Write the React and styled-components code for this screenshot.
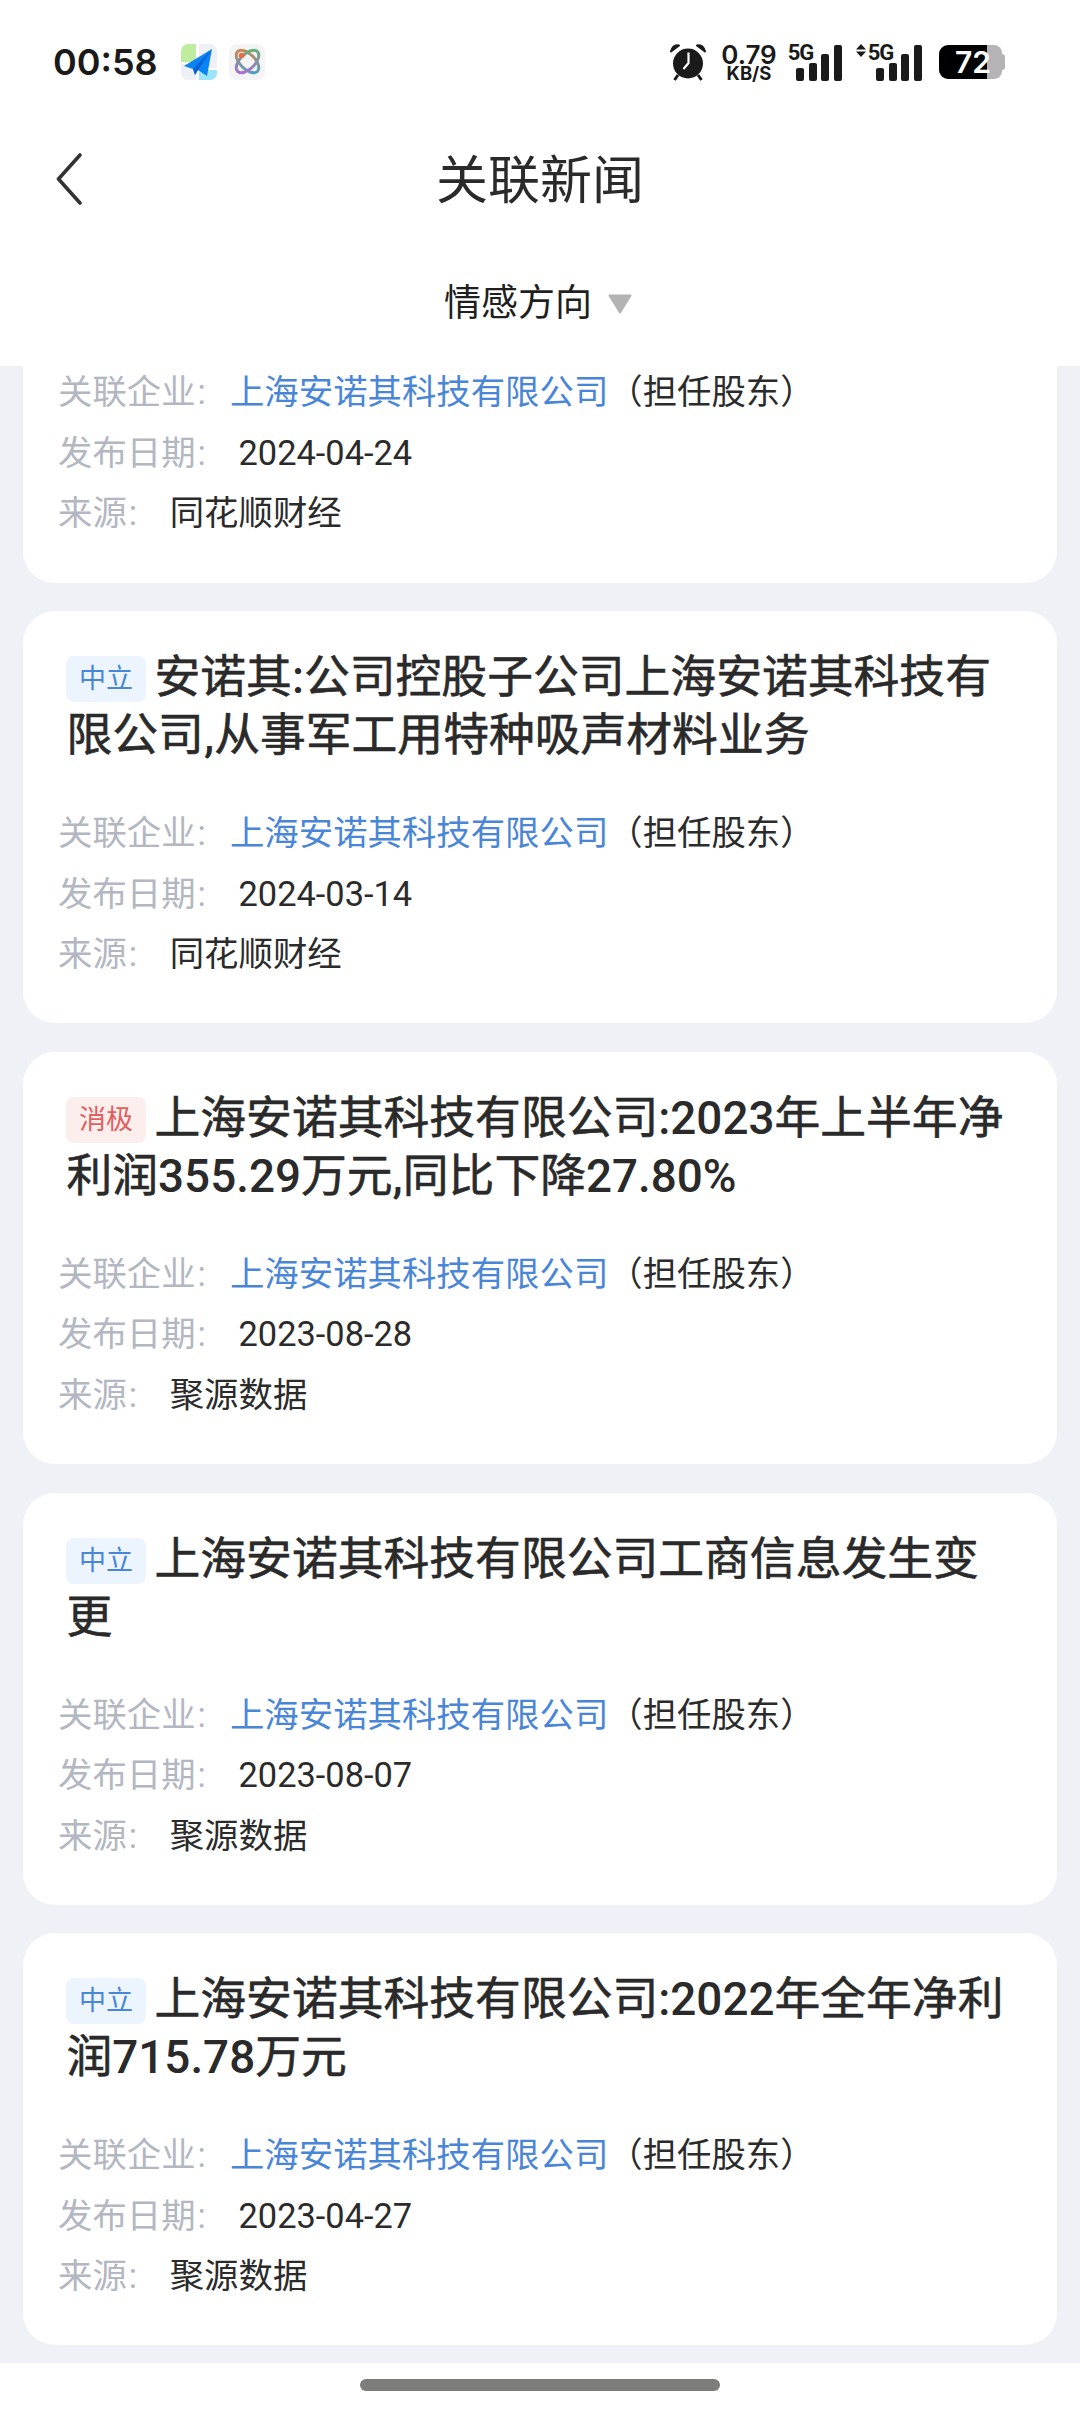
import React from "react";
import styled, { createGlobalStyle } from "styled-components";

const news = [
  { meta: { source: "同花顺财经", date: "2024-04-24" }, clipped: true },
  {
    tag: "中立",
    title: "安诺其:公司控股子公司上海安诺其科技有限公司,从事军工用特种吸声材料业务",
    meta: { source: "同花顺财经", date: "2024-03-14" },
  },
  {
    tag: "消极",
    negative: true,
    title: "上海安诺其科技有限公司:2023年上半年净利润355.29万元,同比下降27.80%",
    meta: { source: "聚源数据", date: "2023-08-28" },
  },
  {
    tag: "中立",
    title: "上海安诺其科技有限公司工商信息发生变更",
    meta: { source: "聚源数据", date: "2023-08-07" },
  },
  {
    tag: "中立",
    title: "上海安诺其科技有限公司:2022年全年净利润715.78万元",
    meta: { source: "聚源数据", date: "2023-04-27" },
  },
];

const AppIconPlane = () => (
  <svg width="36" height="36" viewBox="0 0 36 36">
    <path d="M0 20h15v16H7a7 7 0 0 1-7-7z" fill="#edf1f6" />
    <path d="M18 0h11a7 7 0 0 1 7 7v17H18z" fill="#edf1f6" />
    <path d="M0 7a7 7 0 0 1 7-7h8v18H0z" fill="#c0ec9f" />
    <path d="M18 26h18v3a7 7 0 0 1-7 7H18z" fill="#9be6fa" />
    <path d="M31 5L3 22l9 3 2 6 3-5 9 6z" fill="#0a84f5" />
    <path d="M31 5L12 25l2 6 3-5z" fill="#0561d8" />
  </svg>
);

const AppIconOrbit = () => (
  <svg width="36" height="36" viewBox="0 0 36 36" fill="none" strokeWidth="3">
    <defs>
      <linearGradient id="orbitA" gradientUnits="userSpaceOnUse" x1="6" y1="6" x2="30" y2="30">
        <stop offset="0" stopColor="#f0813a" />
        <stop offset="1" stopColor="#2ea6e0" />
      </linearGradient>
      <linearGradient id="orbitB" gradientUnits="userSpaceOnUse" x1="30" y1="6" x2="6" y2="30">
        <stop offset="0" stopColor="#55c06a" />
        <stop offset="1" stopColor="#b85fe6" />
      </linearGradient>
    </defs>
    <rect width="36" height="36" rx="8" fill="#f4f4f6" />
    <ellipse cx="18.5" cy="17.5" rx="14" ry="7.5" transform="rotate(45 18.5 17.5)" stroke="url(#orbitA)" />
    <ellipse cx="18.5" cy="17.5" rx="14" ry="7.5" transform="rotate(-45 18.5 17.5)" stroke="url(#orbitB)" />
    <circle cx="12.5" cy="11.5" r="2.8" fill="#ee6a4a" />
  </svg>
);

const AlarmIcon = () => (
  <svg width="36" height="38" viewBox="0 0 36 38">
    <path d="M1 8.5L9 2.5Q3 1 1 8.5zM35 8.5L27 2.5Q33 1 35 8.5z" fill="#1a1a1a" stroke="#1a1a1a" strokeWidth="2" strokeLinejoin="round" />
    <circle cx="18" cy="20.5" r="15" fill="#1a1a1a" />
    <path d="M8 32l-3.5 5M28 32l3.5 5" stroke="#1a1a1a" strokeWidth="3" />
    <path d="M18.5 9.5v10.5l-5 6" stroke="#fff" strokeWidth="2.2" fill="none" />
  </svg>
);

const Signal = ({ arrows }) => (
  <SignalWrap arrows={arrows}>
    {arrows && (
      <svg width="10" height="13" viewBox="0 0 10 13">
        <path d="M5 0l5 5.5H0zM5 13L0 7.5h10z" fill="#1a1a1a" />
      </svg>
    )}
    <FiveG>5G</FiveG>
    <Bars>
      {[13, 18, 27, 36].map((h) => (
        <Bar key={h} height={h} />
      ))}
    </Bars>
  </SignalWrap>
);

// latin runs of a title are a bit heavier than the chinese ones
const titleParts = (title) =>
  title.split(/([0-9.,:%]+)/).map((part, idx) => (idx % 2 ? <Latin key={idx}>{part}</Latin> : part));

const NewsCard = ({ item }) => (
  <Card clipped={item.clipped}>
    {item.title && (
      <Title>
        <Tag negative={item.negative}>{item.tag}</Tag>
        {titleParts(item.title)}
      </Title>
    )}
    <div>
      <MetaRow>
        <Label>关联企业<Colon>:</Colon></Label>
        <Company>上海安诺其科技有限公司</Company>
        <Value>{"\uFF08担任股东\uFF09"}</Value>
      </MetaRow>
      <MetaRow>
        <Label>发布日期<Colon>:</Colon></Label>
        <Value> {item.meta.date}</Value>
      </MetaRow>
      <MetaRow>
        <Label>来源<Colon>:</Colon></Label>
        <Value> {item.meta.source}</Value>
      </MetaRow>
    </div>
  </Card>
);

const App = () => {
  return (
    <Page>
      <GlobalStyle />
      <StatusBar>
        <StatusLeft>
          <Time>00:58</Time>
          <AppIcons>
            <AppIconPlane />
            <AppIconOrbit />
          </AppIcons>
        </StatusLeft>
        <StatusRight>
          <AlarmIcon />
          <Speed>
            <SpeedValue>0.79</SpeedValue>
            <SpeedUnit>KB/S</SpeedUnit>
          </Speed>
          <Signal />
          <Signal arrows />
          <Battery>
            <BatteryLevel>72</BatteryLevel>
          </Battery>
        </StatusRight>
      </StatusBar>
      <NavBar>
        <BackButton>
          <svg width="26" height="52" viewBox="0 0 26 52" fill="none">
            <path d="M24 2L2.5 26 24 50" stroke="#333" strokeWidth="3.6" strokeLinecap="round" strokeLinejoin="round" />
          </svg>
        </BackButton>
        <NavTitle>关联新闻</NavTitle>
      </NavBar>
      <FilterBar>
        <FilterLabel>情感方向</FilterLabel>
        <FilterCaret width="24" height="20" viewBox="0 0 24 20">
          <path d="M1.5 1.5h21L12 18.5z" fill="#b3b3b3" stroke="#b3b3b3" strokeWidth="2" strokeLinejoin="round" />
        </FilterCaret>
      </FilterBar>
      <Scroller>
        <Feed>
          {news.map((item, idx) => (
            <NewsCard key={idx} item={item} />
          ))}
        </Feed>
      </Scroller>
      <HomeArea>
        <HomePill />
      </HomeArea>
    </Page>
  );
};

const GlobalStyle = createGlobalStyle`
  html, body {
    margin: 0;
    padding: 0;
    background: #fff;
  }
  * {
    box-sizing: border-box;
  }
`;
const Page = styled.div`
  width: 1080px;
  height: 2412px;
  display: flex;
  flex-direction: column;
  background: #fff;
  overflow: hidden;
  font-family: "Roboto", "Noto Sans CJK SC", sans-serif;
`;
const StatusBar = styled.div`
  height: 124px;
  flex: none;
  display: flex;
  align-items: center;
  justify-content: space-between;
  padding: 0 75px 0 53px;
`;
const StatusLeft = styled.div`
  display: flex;
  align-items: center;
  gap: 26px;
`;
const Time = styled.span`
  width: 102px;
  font-family: "Inter", sans-serif;
  font-weight: 600;
  font-size: 36px;
  color: #1a1a1a;
`;
const AppIcons = styled.div`
  display: flex;
  gap: 12px;
`;
const StatusRight = styled.div`
  display: flex;
  align-items: center;
  gap: 12px;
`;
const Speed = styled.div`
  width: 58px;
  margin-left: 2px;
  display: flex;
  flex-direction: column;
  align-items: center;
  font-family: "Inter", sans-serif;
  color: #1a1a1a;
  font-weight: 600;
`;
const SpeedValue = styled.span`
  font-size: 26px;
  line-height: 23px;
`;
const SpeedUnit = styled.span`
  font-size: 18.5px;
  line-height: 15px;
  font-weight: 700;
`;
const SignalWrap = styled.div`
  position: relative;
  width: ${(props) => (props.arrows ? 66 : 52)}px;
  height: 37px;
  display: flex;
  justify-content: space-between;
  align-items: flex-start;
  margin-left: ${(props) => (props.arrows ? 2 : 0)}px;
`;
const FiveG = styled.span`
  position: absolute;
  right: 29px;
  top: -3px;
  font-family: "Roboto", sans-serif;
  font-weight: 700;
  font-size: 22px;
  line-height: 24px;
  letter-spacing: -1.2px;
  color: #1a1a1a;
`;
const Bars = styled.div`
  display: flex;
  align-items: flex-end;
  gap: 4.67px;
  height: 37px;
  margin-left: auto;
`;
const Bar = styled.span`
  width: 8px;
  height: ${(props) => props.height}px;
  border-radius: 2px;
  background: #1a1a1a;
`;
const Battery = styled.div`
  position: relative;
  width: 63px;
  height: 34px;
  margin: 0 3px 0 5px;
  border-radius: 9px 8px 8px 9px;
  background: linear-gradient(90deg, #000 0 76%, #b5b3b6 76% 100%);
  &::after {
    content: "";
    position: absolute;
    right: -3px;
    top: 9px;
    width: 4px;
    height: 16px;
    border-radius: 0 3px 3px 0;
    background: #b5b3b6;
  }
`;
const BatteryLevel = styled.span`
  position: absolute;
  left: 16px;
  top: 0;
  font-family: "Inter", sans-serif;
  font-weight: 600;
  font-size: 30px;
  line-height: 34px;
  color: #fff;
`;
const NavBar = styled.div`
  position: relative;
  height: 110px;
  flex: none;
  display: flex;
  align-items: center;
  justify-content: center;
  padding-bottom: 5px;
`;
const BackButton = styled.div`
  position: absolute;
  left: 56px;
  top: 29px;
  display: flex;
`;
const NavTitle = styled.h1`
  margin: 0;
  font-weight: 400;
  font-size: 52px;
  color: #2a2a2a;
`;
const FilterBar = styled.div`
  height: 132px;
  flex: none;
  display: flex;
  align-items: center;
  justify-content: center;
  gap: 16px;
  padding-right: 4px;
`;
const FilterLabel = styled.span`
  font-size: 37px;
  color: #1f1f1f;
`;
const FilterCaret = styled.svg`
  margin-top: 8px;
`;
const Scroller = styled.div`
  flex: 1;
  overflow: hidden;
  background: #eef2f7;
`;
const Feed = styled.div`
  display: flex;
  flex-direction: column;
  gap: 28.7px;
  margin-top: -4px;
  padding: 0 23px;
`;
const Card = styled.article`
  flex: none;
  height: ${(props) => (props.clipped ? 220.5 : 412)}px;
  padding: ${(props) => (props.clipped ? "0" : "38px")} 37px 0 35px;
  background: #fff;
  border-radius: ${(props) => (props.clipped ? "0 0 32px 32px" : "32px")};
`;
const Title = styled.h2`
  margin: 0 0 38px 8.5px;
  font-weight: 400;
  -webkit-text-stroke: 0.6px #2a2a2a;
  font-size: 45.8px;
  line-height: 58px;
  color: #2a2a2a;
`;
const Latin = styled.span`
  font-weight: 500;
  -webkit-text-stroke: 0;
`;
const Tag = styled.span`
  display: inline-block;
  width: 80px;
  height: 46px;
  margin: 0 8.5px 0 -0.5px;
  border-radius: 8px;
  font-weight: 400;
  font-size: 27px;
  line-height: 46px;
  text-align: center;
  vertical-align: 5px;
  -webkit-text-stroke: 0;
  color: ${(props) => (props.negative ? "#e0605f" : "#4a86d8")};
  background: ${(props) => (props.negative ? "#fdeeee" : "#ecf5fe")};
`;
const MetaRow = styled.div`
  font-size: 34.4px;
  line-height: 60.5px;
  white-space: pre;
`;
const Label = styled.span`
  color: #b2b7c2;
`;
const Colon = styled.span`
  display: inline-block;
  width: 1em;
  padding-left: 2px;
`;
const Company = styled.span`
  color: #4a86d8;
`;
const Value = styled.span`
  color: #2b2b2b;
`;
const HomeArea = styled.div`
  height: 49px;
  flex: none;
  display: flex;
  justify-content: center;
  padding-top: 16px;
  background: #fff;
`;
const HomePill = styled.div`
  width: 360px;
  height: 12px;
  border-radius: 6px;
  background: #7d7e7b;
`;

export default App;
